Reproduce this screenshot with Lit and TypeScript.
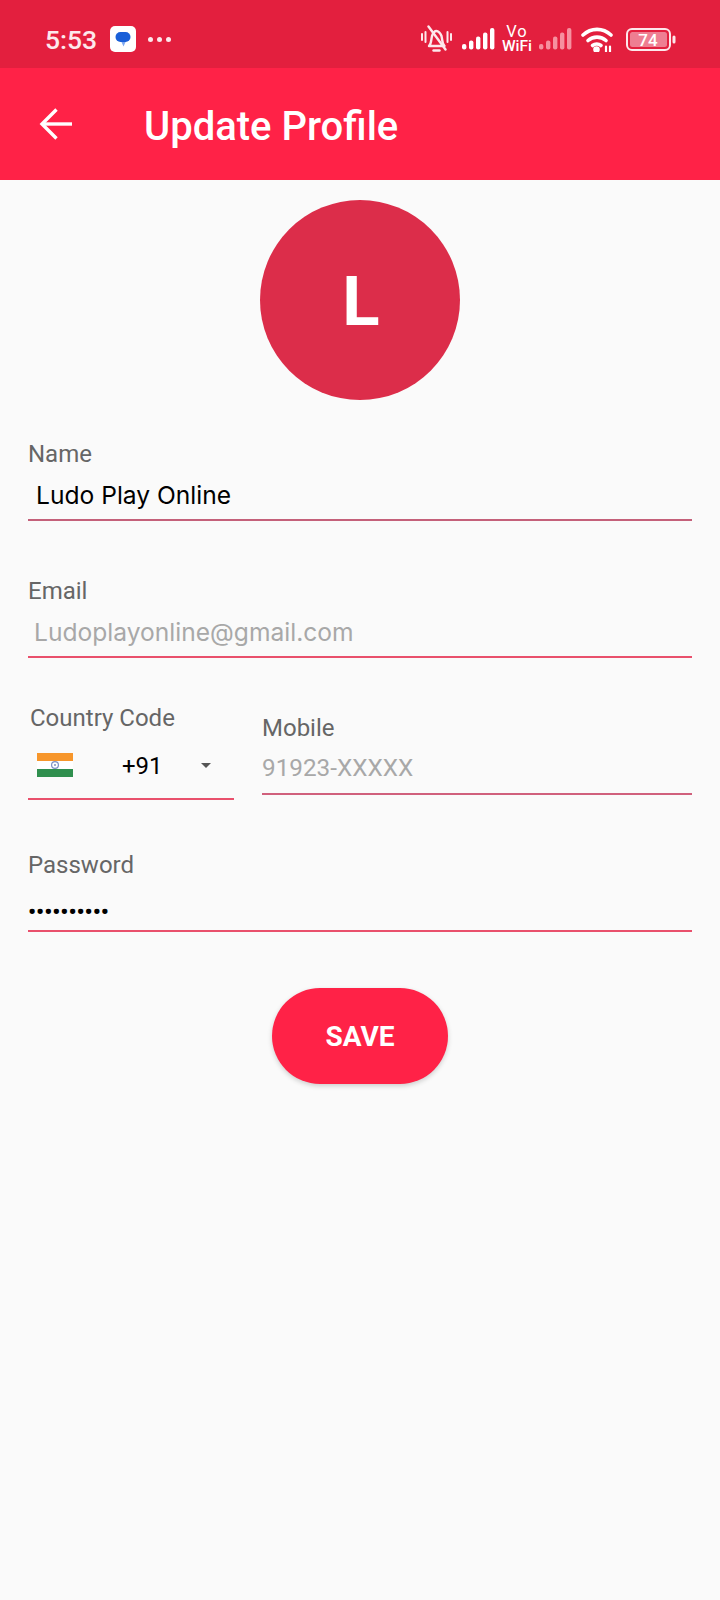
import { LitElement, html, css, svg } from "lit";
import { customElement } from "lit/decorators.js";

// Five ascending signal bars, the first a short stub.
const signalBars = svg`
  <rect x="0" y="16" width="4.4" height="5.5" rx="2"/>
  <rect x="7" y="12.5" width="4.4" height="9" rx="2"/>
  <rect x="14" y="8.5" width="4.4" height="13" rx="2"/>
  <rect x="21" y="4.5" width="4.4" height="17" rx="2"/>
  <rect x="28" y="0" width="4.4" height="21.5" rx="2"/>`;

@customElement("app-root")
export class AppRoot extends LitElement {
  static styles = css`
    :host { display: block; width: 720px; height: 1600px; background: #fafafa; font-family: Roboto, sans-serif; overflow: hidden; }
    .status { height: 68px; background: #e31f3e; color: #fde8ec; display: flex; align-items: center; padding: 10px 0 0 45px; box-sizing: border-box; }
    .time { font-size: 26.5px; font-weight: 500; width: 65px; }
    .msg { width: 26px; height: 26px; background: #fff; border-radius: 5px; display: flex; align-items: center; justify-content: center; }
    .dots { margin-left: 12px; display: flex; gap: 4px; }
    .dots i { width: 5px; height: 5px; border-radius: 50%; background: #fde8ec; }
    .tray { margin-left: auto; margin-right: 44px; display: flex; align-items: center; }
    .bell { margin-right: 9px; }
    .sig { fill: #fff; }
    .sig.dim { fill: #f6909f; }
    .vowifi { display: flex; flex-direction: column; align-items: center; width: 30px; color: #fff; font-weight: 500; margin: -2px 7px 0 7px; }
    .vo { font-size: 16.5px; font-weight: 400; letter-spacing: 1px; line-height: 15px; }
    .wf { font-size: 15.5px; line-height: 14px; }
    .wifi { margin-left: 9px; margin-right: 13px; }
    .bar { height: 112px; background: #ff2247; color: #fff; display: flex; align-items: center; padding-left: 39px; }
    .bar h1 { margin: 6px 0 0 71px; font-size: 40px; font-weight: 500; line-height: 46px; }
    .avatar-wrap { display: flex; justify-content: center; padding-top: 20px; }
    .avatar { width: 200px; height: 200px; box-sizing: border-box; padding: 2px 0 0 2px; border-radius: 50%; background: #dc2d4a; color: #fff; display: flex; align-items: center; justify-content: center; font-size: 69px; font-weight: 700; }
    form { padding: 41px 28px 0; display: block; }
    .field { display: block; border-bottom: 2px solid #e9506c; }
    .label { display: block; font-size: 24px; line-height: 26px; padding-bottom: 2px; color: #666; }
    .val { display: block; font-family: Inter, sans-serif; font-size: 24.6px; line-height: 32px; padding: 10px 0 8px; }
    .name { border-bottom-color: #c4607a; margin-bottom: 57px; }
    .name .val { color: #000; padding-left: 8px; }
    .email { margin-bottom: 47px; }
    .email .val { color: #a8a8a8; padding-left: 6px; }
    .pair { display: flex; gap: 28px; align-items: flex-start; margin-bottom: 52px; }
    .cc { width: 206px; flex: none; border-bottom: 2px solid #e9506c; }
    .cc .label { padding-left: 2px; }
    .cc-row { display: flex; align-items: center; height: 65px; padding: 0 23px 0 9px; }
    .flag { margin-top: -1px; }
    .code { margin: 1px 0 0 49px; font-size: 24px; color: #000; }
    .caret { margin-left: auto; width: 0; height: 0; border: 5px solid transparent; border-top-color: #555; border-bottom: 0; }
    .mobile { flex: 1; margin-top: 10px; border-bottom-color: #d0607c; }
    .mobile .val { color: #a8a8a8; font-family: Roboto, sans-serif; font-size: 24.3px; padding: 9px 0; }
    .pw .val { color: #000; font-family: Roboto, sans-serif; font-size: 22.5px; font-weight: 700; padding: 18px 0 6px; line-height: 26px; }
    .actions { display: flex; justify-content: center; margin-top: 56px; }
    .save { width: 176px; height: 96px; border: 0; border-radius: 48px; background: #ff2247; color: #fff; font: 700 28px Roboto, sans-serif; box-shadow: 0 2px 5px rgba(0,0,0,.18); }
  `;

  render() {
    return html`
      <div class="status">
        <span class="time">5:53</span>
        <span class="msg">
          <svg width="20" height="20" viewBox="0 0 20 20">
            <path d="M8 12h5l-2.5 5.5z" fill="#7ea8f0"/>
            <rect x="2.5" y="3" width="15" height="10" rx="5" fill="#1a5fd8"/>
          </svg>
        </span>
        <span class="dots"><i></i><i></i><i></i></span>
        <div class="tray">
          <svg class="bell" width="33" height="28" viewBox="0 0 33 28" fill="none" stroke="#fde8ec" stroke-width="2.4" stroke-linecap="round" stroke-linejoin="round">
            <path d="M9 21c2.5-2 2-6 3-10 1-3 3-5 4.500-5s4 2 5 5c1 4 .5 8 3 10z"/>
            <path d="M13.500 25.500h6"/>
            <path d="M8.500 1.500l17 23"/>
            <path d="M2 9v6M5.500 7v10M27.500 7v10M31 9v6" stroke-width="2"/>
          </svg>
          <svg class="sig" width="33" height="22" viewBox="0 0 33 22">${signalBars}</svg>
          <span class="vowifi"><span class="vo">Vo</span><span class="wf">WiFi</span></span>
          <svg class="sig dim" width="33" height="22" viewBox="0 0 33 22">${signalBars}</svg>
          <svg class="wifi" width="32" height="25" viewBox="0 0 32 25" fill="none" stroke="#fff" stroke-width="3.6" stroke-linecap="round">
            <path d="M2 8c8-7.500 20-7.500 28 0"/>
            <path d="M7 13.500c5-4.500 13-4.500 18 0"/>
            <path d="M11.500 18.500c2.500-2 6-2 8.500 0"/>
            <circle cx="15.500" cy="22.500" r="1.500" fill="#fff"/>
            <path d="M25 24.500v-5M29 24.500v-5" stroke-width="2.200"/>
          </svg>
          <svg width="50" height="23" viewBox="0 0 50 23">
            <rect x="1" y="1" width="43" height="21" rx="5" fill="none" stroke="#fde8ec" stroke-width="2"/>
            <rect x="4" y="4" width="37" height="15" rx="2.500" fill="#ee7e92"/>
            <rect x="46.500" y="7.500" width="3" height="8" rx="1.500" fill="#fde8ec"/>
            <text x="22" y="17.500" text-anchor="middle" font-family="Roboto, sans-serif" font-size="17" font-weight="500" fill="#fff">74</text>
          </svg>
        </div>
      </div>
      <div class="bar">
        <svg width="34" height="34" viewBox="0 0 34 34" fill="none" stroke="#fff" stroke-width="3.4">
          <path d="M33 17H3"/>
          <path d="M17.500 2.500L3 17l14.500 14.500"/>
        </svg>
        <h1>Update Profile</h1>
      </div>
      <div class="avatar-wrap"><div class="avatar">L</div></div>
      <form>
        <label class="field name"><span class="label">Name</span><span class="val">Ludo Play Online</span></label>
        <label class="field email"><span class="label">Email</span><span class="val">Ludoplayonline@gmail.com</span></label>
        <div class="pair">
          <div class="cc">
            <span class="label">Country Code</span>
            <div class="cc-row">
              <svg class="flag" width="36" height="24" viewBox="0 0 36 24">
                <rect width="36" height="8" fill="#f7962b"/>
                <rect y="8" width="36" height="8" fill="#fff"/>
                <rect y="16" width="36" height="8" fill="#2f8f4e"/>
                <circle cx="18" cy="12" r="3.400" fill="none" stroke="#7d8fc4" stroke-width="1.200"/>
                <circle cx="18" cy="12" r="1" fill="#7d8fc4"/>
              </svg>
              <span class="code">+91</span>
              <span class="caret"></span>
            </div>
          </div>
          <label class="field mobile"><span class="label">Mobile</span><span class="val">91923-XXXXX</span></label>
        </div>
        <label class="field pw"><span class="label">Password</span><span class="val">••••••••••</span></label>
        <div class="actions"><button class="save" type="button">SAVE</button></div>
      </form>
    `;
  }
}
